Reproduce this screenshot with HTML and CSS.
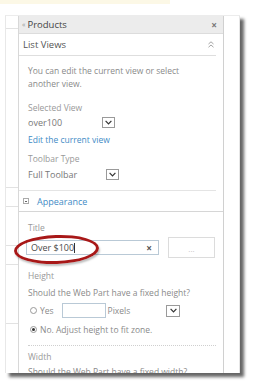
FILE: index.html
```html
<!DOCTYPE html>
<html lang="en">
<head>
  <meta charset="UTF-8">
  <meta name="viewport" content="width=device-width, initial-scale=1.0">
  <title>Products - Web Part Properties</title>
  <link rel="stylesheet" href="styles.css">
</head>
<body>
  <div class="topbar"></div>
  <div class="window">
    <div class="side">
      <div class="side-box tall"></div>
      <div class="side-box short"></div>
      <div class="side-box"></div>
    </div>

    <div class="panel">
      <div class="panel-head">
        <span class="collapse">&laquo;</span>
        <span class="panel-title">Products</span>
        <span class="close">&times;</span>
      </div>

      <div class="section-head">
        <span>List Views</span>
        <svg class="chev" width="6" height="7" viewBox="0 0 6 7">
          <path d="M0.5 3 L3 0.8 L5.5 3 M0.5 6.2 L3 4 L5.5 6.2" fill="none" stroke="#999" stroke-width="0.9"/>
        </svg>
      </div>

      <div class="section-body">
        <p class="desc">You can edit the current view or select another view.</p>

        <div class="label first">Selected View</div>
        <div class="select view-select">
          <span>over100</span>
          <span class="arrow"><svg width="7" height="5" viewBox="0 0 7 5"><path d="M0.6 0.8 L3.5 3.8 L6.4 0.8" fill="none" stroke="#333" stroke-width="1.2"/></svg></span>
        </div>
        <div class="link">Edit the current view</div>

        <div class="label">Toolbar Type</div>
        <div class="select toolbar-select">
          <span>Full Toolbar</span>
          <span class="arrow"><svg width="7" height="5" viewBox="0 0 7 5"><path d="M0.6 0.8 L3.5 3.8 L6.4 0.8" fill="none" stroke="#333" stroke-width="1.2"/></svg></span>
        </div>
      </div>

      <div class="group-head">
        <span class="minus-box"></span>
        <span class="link">Appearance</span>
      </div>

      <div class="appearance">
        <div class="label title-label">Title</div>
        <div class="title-row">
          <div class="text-input title-input">
            <span>Over $100</span><span class="caret"></span>
            <span class="clear">&times;</span>
          </div>
          <div class="dots-btn">...</div>
          <div class="highlight"></div>
        </div>

        <div class="label height-label">Height</div>
        <div class="question">Should the Web Part have a fixed height?</div>
        <div class="radio-row yes-row">
          <span class="radio"></span>
          <span>Yes</span>
          <div class="text-input pixels-input"></div>
          <span>Pixels</span>
          <span class="arrow unit-arrow"><svg width="7" height="5" viewBox="0 0 7 5"><path d="M0.6 0.8 L3.5 3.8 L6.4 0.8" fill="none" stroke="#333" stroke-width="1.2"/></svg></span>
        </div>
        <div class="radio-row no-row">
          <span class="radio checked"></span>
          <span>No. Adjust height to fit zone.</span>
        </div>

        <div class="dotted"></div>

        <div class="label width-label">Width</div>
        <div class="question cut">Should the Web Part have a fixed width?</div>
      </div>
    </div>

    <div class="gutter"></div>
  </div>
</body>
</html>
```

FILE: styles.css
```css
* {
  box-sizing: border-box;
  margin: 0;
  padding: 0;
}

body {
  font-family: "Open Sans", "Noto Sans", sans-serif;
  font-size: 8.5px;
  color: #8a8a8a;
  background: white;
  width: 255px;
  height: 386px;
  overflow: hidden;
}

.topbar {
  width: 170px;
  height: 4px;
  background: #fcf8e6;
}

.window {
  display: flex;
  margin-top: 11px;
  margin-left: 5px;
  width: 235px;
  height: 358px;
  background: white;
  border-left: 1px solid #e8e8e8;
  border-top: 1px solid #ececec;
  box-shadow: 4px 4px 3px rgba(0, 0, 0, 0.6);
  overflow: hidden;
}

/* left strip: edges of the page behind the tool pane */
.side {
  width: 12px;
  padding-top: 12px;
  display: flex;
  flex-direction: column;
  gap: 18px;
}

.side-box {
  border-top: 1px solid #e2e2e2;
  border-bottom: 1px solid #e2e2e2;
  height: 60px;
}

.side-box.tall {
  height: 160px;
}

.side-box.short {
  height: 40px;
}

.panel {
  width: 206px;
  border-left: 1px solid #d8d8d8;
  border-right: 1px solid #d0d0d0;
}

.panel-head {
  display: flex;
  align-items: center;
  height: 18px;
  background: #ececec;
  border-bottom: 1px solid #dcdcdc;
  padding: 0 6px 0 3px;
  color: #444;
  font-size: 9.5px;
}

.collapse {
  font-size: 7px;
  color: #999;
  margin-right: 2px;
}

.panel-title {
  flex: 1;
}

.close {
  font-size: 10px;
  font-weight: bold;
  color: #777;
}

.section-head {
  display: flex;
  align-items: center;
  justify-content: space-between;
  height: 22px;
  margin-right: 7px;
  padding: 0 2px 0 4px;
  border-bottom: 1px solid #dedede;
  color: #555;
  font-size: 9.5px;
}

.section-body {
  margin-right: 7px;
  padding: 8px 0 9px 9px;
  border-bottom: 1px solid #e4e4e4;
}

.desc {
  line-height: 13px;
  padding-right: 10px;
}

.label {
  line-height: 13px;
  margin-top: 6px;
  color: #999;
}

.label.first {
  margin-top: 11px;
}

.select {
  display: flex;
  align-items: center;
  justify-content: space-between;
  height: 14px;
  margin-top: 1px;
  color: #777;
  font-size: 9px;
}

.view-select {
  width: 87px;
}

.toolbar-select {
  width: 91px;
  margin-top: 2px;
}

.arrow {
  display: flex;
  align-items: center;
  justify-content: center;
  width: 13px;
  height: 11px;
  border: 1px solid #9a9a9a;
  background: white;
}

.link {
  color: #3f8cc6;
  line-height: 13px;
  margin-top: 4px;
}

.group-head {
  display: flex;
  align-items: center;
  height: 21px;
  padding-left: 4px;
  border-bottom: 1px solid #d6d6d6;
  font-size: 9px;
}

.group-head .link {
  margin-top: 0;
}

.minus-box {
  width: 6px;
  height: 6px;
  border: 1px solid #aaa;
  margin-right: 8px;
  position: relative;
}

.minus-box::after {
  content: "";
  position: absolute;
  left: 1px;
  top: 1.5px;
  width: 2px;
  height: 1px;
  background: #666;
}

.appearance {
  padding: 0 0 0 9px;
}

.title-label {
  margin-top: 9px;
}

.title-row {
  position: relative;
  display: flex;
  align-items: center;
  height: 21px;
  margin-top: 3px;
  gap: 9px;
}

.text-input {
  height: 15px;
  border: 1px solid #b9c9d6;
  background: white;
}

.title-input {
  display: flex;
  align-items: center;
  width: 133px;
  margin-left: -2px;
  padding-left: 4px;
  color: #4a4a4a;
  font-size: 9px;
}

.caret {
  width: 1px;
  height: 10px;
  background: #333;
}

.clear {
  margin-left: auto;
  margin-right: 6px;
  font-weight: bold;
  color: #555;
  font-size: 10px;
}

.dots-btn {
  width: 47px;
  height: 21px;
  border: 1px solid #dcdcdc;
  text-align: center;
  line-height: 22px;
  color: #c4c4c4;
  font-size: 8px;
}

.highlight {
  position: absolute;
  left: -14px;
  top: -2px;
  width: 85px;
  height: 29px;
  border: 3px solid #a81818;
  border-radius: 50%;
  box-shadow: 1px 2px 2px rgba(0, 0, 0, 0.25);
  transform: rotate(-2deg);
}

.height-label {
  margin-top: 11px;
}

.question {
  line-height: 13px;
  margin-top: 4px;
}

.radio-row {
  display: flex;
  align-items: center;
  height: 15px;
  gap: 2px;
}

.yes-row {
  margin-top: 4px;
}

.no-row {
  margin-top: 4px;
}

.radio {
  width: 7px;
  height: 7px;
  border: 1px solid #999;
  border-radius: 50%;
  margin: 0 1px 0 2px;
  position: relative;
}

.radio.checked::after {
  content: "";
  position: absolute;
  left: 1px;
  top: 1px;
  width: 3px;
  height: 3px;
  border-radius: 50%;
  background: #333;
}

.pixels-input {
  width: 44px;
  margin-left: 6px;
}

.unit-arrow {
  margin-left: 34px;
  width: 14px;
  height: 12px;
}

.dotted {
  margin: 8px 7px 0 0;
  border-top: 1px dotted #cfcfcf;
}

.width-label {
  margin-top: 4px;
}

.question.cut {
  margin-top: 2px;
}

.gutter {
  flex: 1;
  border-right: 1px solid #e6e6e6;
}
```
